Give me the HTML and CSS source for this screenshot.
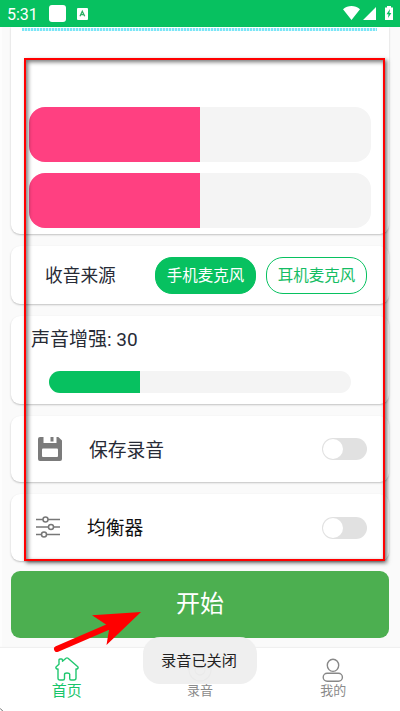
FILE: index.html
```html
<!DOCTYPE html>
<html lang="zh-CN">
<head>
<meta charset="utf-8">
<title>录音</title>
<link rel="stylesheet" href="styles.css">
</head>
<body>
<div class="screen">
  <header class="status">
    <span class="time">5:31</span>
    <i class="chip"></i>
    <svg class="input-icon" width="11" height="12" viewBox="0 0 11 12"><rect width="11" height="12" rx="1" fill="#fff"/><path d="M3 8.3 5.3 3.3 7.7 8.3M3.8 6.7h3.1" fill="none" stroke="#2fae65" stroke-width="1.3"/></svg>
    <svg class="system" width="52" height="17" viewBox="0 0 52 17" fill="#fff"><path d="M0 4.2C5-.1 12-.1 17 4.2L8.5 15ZM20 15 33 2v13Z"/><path d="M44 1h4v1.6h2V15h-8V2.600h2Z"/><path d="m47 4-3.500 5.300h2L45 13l3.400-5h-2Z" fill="#07c160"/></svg>
  </header>
  <main class="content">
    <section class="card levels">
      <div class="dots"></div>
      <div class="level"><div class="level-fill"></div></div>
      <div class="level"><div class="level-fill"></div></div>
    </section>
    <section class="card source">
      <span class="source-title">收音来源</span>
      <button class="pill active">手机麦克风</button>
      <button class="pill">耳机麦克风</button>
    </section>
    <section class="card gain">
      <div class="gain-title">声音增强: 30</div>
      <div class="slider"><div class="slider-fill"></div></div>
    </section>
    <section class="card option save">
      <svg class="option-icon" width="24" height="24" viewBox="0 0 24 24"><path d="M2 0h3.500v6h13V0h1.800L24 3.500V22q0 2-2 2H2q-2 0-2-2V2q0-2 2-2Z" fill="#7b7b7b"/><path d="M12.500 0h3v4.500h-3Z" fill="#7b7b7b"/><rect x="4" y="11.500" width="16" height="8.500" rx="1" fill="#fff"/></svg>
      <span class="option-title">保存录音</span>
      <i class="toggle"></i>
    </section>
    <section class="card option equalizer">
      <svg class="option-icon" width="24" height="22" viewBox="0 0 24 22" fill="none" stroke="#777" stroke-width="1.500"><path d="M0 3.500h7M12 3.500h12M0 11h12.500M17.500 11H24M0 18.500h5.500M10.500 18.500H24"/><circle cx="9.500" cy="3.500" r="2.500"/><circle cx="15" cy="11" r="2.500"/><circle cx="8" cy="18.500" r="2.500"/></svg>
      <span class="option-title">均衡器</span>
      <i class="toggle"></i>
    </section>
    <button class="start">开始</button>
  </main>
  <nav class="tabs">
    <div class="tab home">
      <svg width="24" height="24" viewBox="0 0 24 24" fill="none" stroke="#20c76f" stroke-width="1.400" stroke-linejoin="round"><path d="M11 1.200Q12 .5 13 1.200L22.500 9.500Q24 11 22 12h-1v9q0 2-2 2h-3q-1.300 0-1.300-1.500v-4.300Q14.500 16 12 16t-2.500 1.400v4.100Q9.500 23 8 23H5q-2 0-2-2v-9H2Q0 11 1.500 9.500L4 7.300V3q0-1 1-1h1.500q1 0 1 1v1.200Z"/></svg>
      <span>首页</span>
    </div>
    <div class="tab">
      <svg width="24" height="24" viewBox="0 0 24 24" fill="none" stroke="#888" stroke-width="1.300"><circle cx="12" cy="12" r="11"/><circle cx="12" cy="12" r="5"/></svg>
      <span>录音</span>
    </div>
    <div class="tab">
      <svg width="24" height="24" viewBox="0 0 24 24" fill="none" stroke="#888" stroke-width="1.400"><ellipse cx="12" cy="7.300" rx="5.700" ry="6.100"/><rect x="2.200" y="15.200" width="19.200" height="8.100" rx="4"/></svg>
      <span>我的</span>
    </div>
  </nav>
  <div class="toast">录音已关闭</div>
  <div class="highlight"></div>
  <svg class="arrow" width="92" height="44" viewBox="0 0 92 44"><path d="M4 39 55 17" stroke="#f00" stroke-width="6" stroke-linecap="round"/><path d="M88 2 39 5.200 53 14.500 56 20 53.500 35Z" fill="#f00"/></svg>
  <svg class="corner" width="4" height="4" viewBox="0 0 4 4"><path d="M0 1.300 2.700 4" stroke="#666" stroke-width="1"/></svg>
</div>
</body>
</html>
```

FILE: styles.css
```css
* { box-sizing: border-box; }
body { margin: 0; }
button { font: inherit; border: 0; padding: 0; }
svg { display: block; }
.screen {
  position: relative;
  width: 400px;
  height: 711px;
  overflow: hidden;
  display: flex;
  flex-direction: column;
  background: #fafafa;
  font-family: Roboto, "Noto Sans CJK SC", sans-serif;
  color: #272b36;
}
.status {
  height: 27px;
  flex: none;
  display: flex;
  align-items: center;
  background: #07c160;
  padding: 0 5px 0 7px;
}
.time { width: 42px; font-size: 16px; color: #fff; line-height: 27px; padding-top: 1px; }
.chip { width: 17px; height: 17px; border-radius: 3px; background: #fff; margin-right: 11px; }
.system { margin-left: auto; }
.content { height: 621px; flex: none; display: flex; flex-direction: column; padding: 0 11px 0 9px; border-left: 2px solid #fdfdfd; }
.card {
  flex: none;
  background: #fff;
  border-radius: 9px;
  box-shadow: 0 1px 2px rgba(0, 0, 0, .23);
  margin-bottom: 12px;
}
.levels { height: 207px; border-radius: 0 0 9px 9px; padding: 1px 18px 0; }
.dots {
  height: 3px;
  margin: 0 -6px 76px -7px;
  background: repeating-linear-gradient(90deg, #7be5f6 0 2px, #d5f8fc 2px 3px);
}
.level { height: 55px; border-radius: 16px; overflow: hidden; background: #f4f4f4; margin-bottom: 11px; }
.level-fill { width: 50%; height: 100%; background: #ff4081; }
.source { height: 58px; display: flex; align-items: center; gap: 10px; padding: 0 22px 0 34px; }
.source-title { width: 100px; font-size: 17.7px; padding-bottom: 2px; }
.pill {
  width: 101px;
  height: 37px;
  border: 1px solid #07c160;
  border-radius: 17px;
  background: #fff;
  color: #15bd64;
  font-size: 15.5px;
  line-height: 35px;
  padding-top: 1px;
  flex: none;
}
.active { background: #07c160; color: #fff; }
.gain { height: 88px; padding: 9px 38px 0 20px; }
.gain-title { height: 29px; line-height: 29px; font-size: 19px; white-space: nowrap; }
.slider { height: 22px; margin: 17px 0 0 18px; border-radius: 11px; overflow: hidden; background: #f4f4f4; }
.slider-fill { width: 30%; height: 100%; background: #07c160; }
.option { height: 66px; display: flex; align-items: center; padding: 0 22px 0 27px; }
.option-title { font-size: 18.800px; margin-left: 27px; padding-bottom: 2px; }
.equalizer { height: 67px; padding-left: 25px; padding-bottom: 2px; margin-bottom: 10px; color: #111; }
.equalizer .option-title { padding-bottom: 0; }
.toggle { width: 45px; height: 22px; border-radius: 11px; background: #e1e1e1; margin-left: auto; padding: 1px; }
.toggle::before { content: ""; display: block; width: 20px; height: 20px; border-radius: 50%; background: #fff; }
.equalizer .toggle { margin-top: 3px; }
.start { height: 67px; flex: none; border-radius: 9px; background: #4caf50; color: #fff; font-size: 24px; line-height: 67px; }
.tabs { height: 63px; flex: none; display: grid; grid-template-columns: repeat(3, 1fr); background: #fff; box-shadow: 0 -1px 1px #f0f0f0; }
.tab { display: flex; flex-direction: column; align-items: center; padding-top: 10px; color: #8b8b8b; font-size: 13px; line-height: 17px; }
.home { color: #18c56a; font-size: 15px; padding-top: 9px; }
.home span { margin-top: 2px; }
.toast {
  position: absolute;
  left: 143px;
  top: 637px;
  width: 114px;
  height: 47px;
  border-radius: 17px;
  background: rgba(238, 238, 238, .96);
  color: #222;
  font-size: 15.200px;
  line-height: 48px;
  padding-right: 2px;
  text-align: center;
}
.highlight {
  position: absolute;
  left: 24px;
  top: 58px;
  width: 361px;
  height: 503px;
  border: 2px solid #f00;
  box-shadow: 2px 2px 4px rgba(0, 0, 0, .55), inset 2px 2px 4px rgba(0, 0, 0, .55);
}
.arrow { position: absolute; left: 53px; top: 610px; }
.corner { position: absolute; left: 0; top: 707px; }
```
